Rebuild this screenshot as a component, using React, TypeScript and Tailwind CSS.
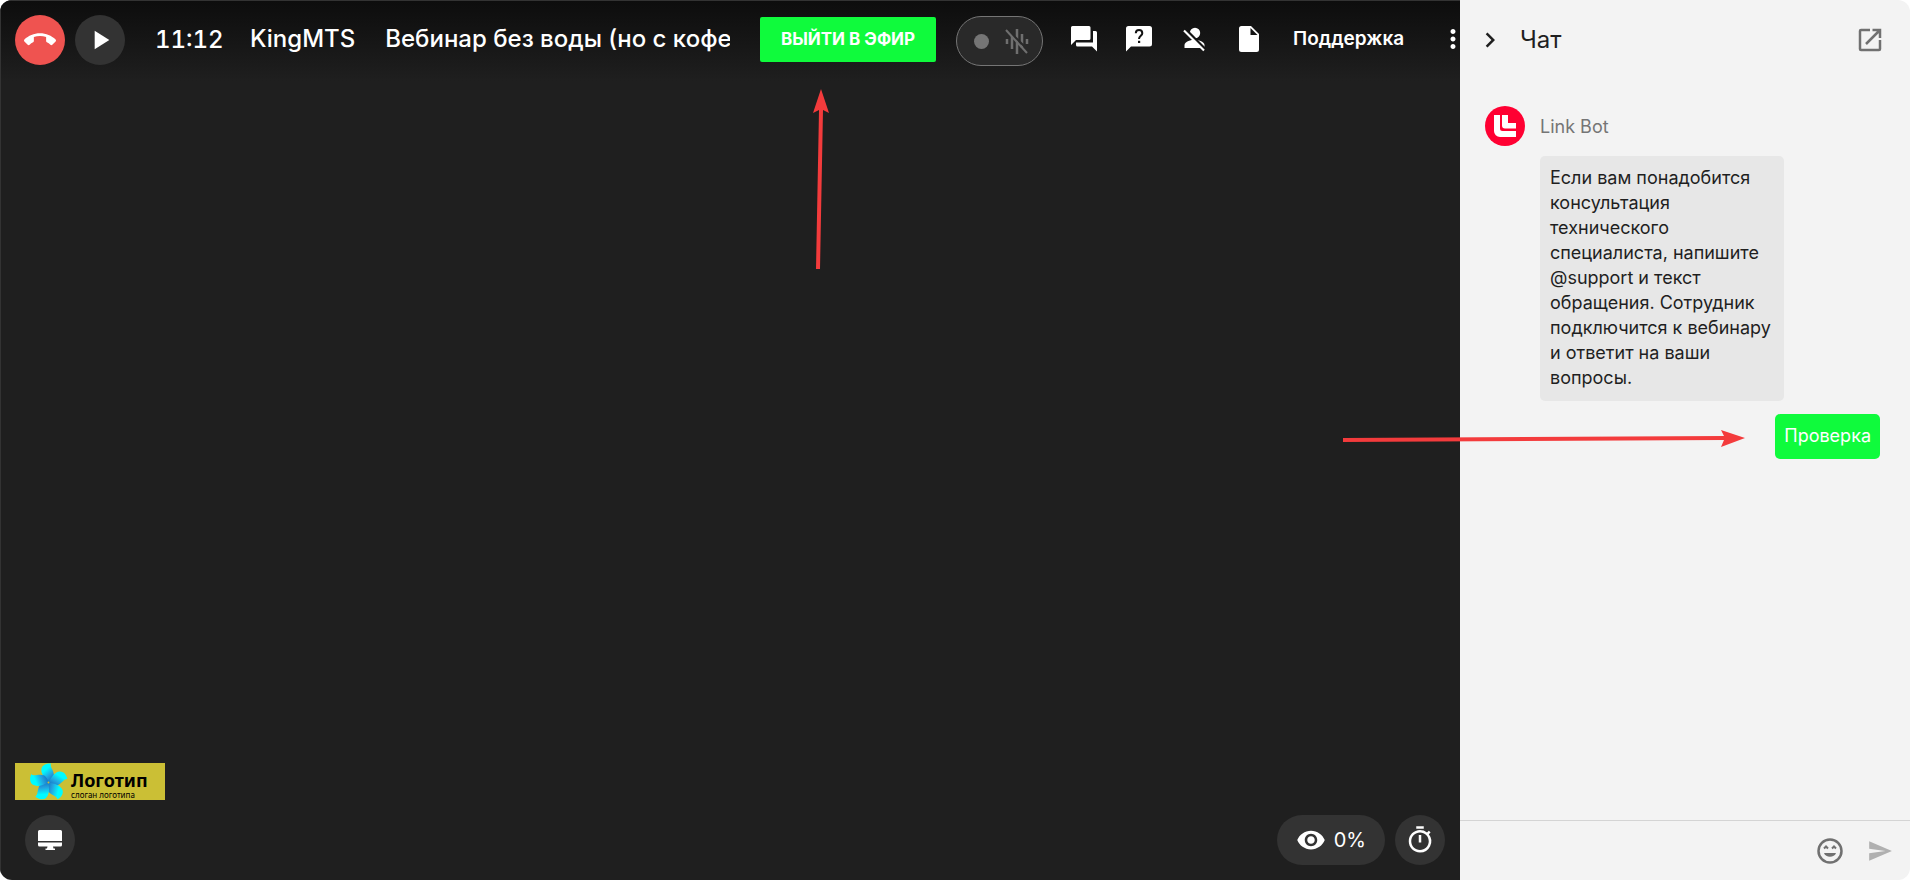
import type { ReactNode } from 'react'
import {
  MdCallEnd,
  MdPlayArrow,
  MdMoreVert,
  MdChevronRight,
  MdVisibility,
  MdOutlineTimer,
  MdSend,
} from 'react-icons/md'

function IconButton({ label, children }: { label: string; children: ReactNode }) {
  return (
    <button
      type="button"
      aria-label={label}
      className="flex h-12 w-[55px] shrink-0 items-center justify-center text-white"
    >
      {children}
    </button>
  )
}

function RoundButton({
  label,
  className = 'bg-[#333333]',
  children,
}: {
  label: string
  className?: string
  children: ReactNode
}) {
  return (
    <button
      type="button"
      aria-label={label}
      className={`flex size-[50px] shrink-0 items-center justify-center rounded-full text-white ${className}`}
    >
      {children}
    </button>
  )
}

function ForumIcon() {
  return (
    <svg viewBox="0 0 26 26" className="size-[26px]" fill="currentColor">
      <path d="M1.5 0h16.5A1.5 1.5 0 0 1 19.500 1.500V12.500A1.500 1.500 0 0 1 18 14H5L0 19V1.500A1.500 1.500 0 0 1 1.500 0Z" />
      <path d="M22 5h2.500A1.500 1.500 0 0 1 26 6.500V25.500l-5-5H6.500A1.500 1.500 0 0 1 5 19v-2.500h17Z" />
    </svg>
  )
}

function QuestionIcon() {
  return (
    <svg viewBox="0 0 26 26" className="size-[26px]">
      <path
        d="M2.500 0h21A2.500 2.500 0 0 1 26 2.500v15.500a2.500 2.500 0 0 1-2.500 2.500H5L0 25.500V2.500A2.500 2.500 0 0 1 2.500 0Z"
        fill="currentColor"
      />
      <path
        d="M9.800 7.200C9.800 2.900 16.300 2.900 16.300 7.200C16.300 9.700 13 10 13 13"
        fill="none"
        stroke="#131313"
        strokeWidth="2"
      />
      <path d="M12 14.800h2.200V17H12Z" fill="#131313" />
    </svg>
  )
}

function PersonOffIcon() {
  return (
    <svg viewBox="0 0 24 26" className="h-[26px] w-6">
      <circle cx="13" cy="7" r="5.200" fill="currentColor" />
      <path d="M2.500 22v-3c0-3.500 7-5.200 10-5.200s10 1.700 10 5.200v3Z" fill="currentColor" />
      <path d="M3.500 3.500l20 20" stroke="#151515" strokeWidth="3" />
      <path d="M2 4.500l20 20" stroke="currentColor" strokeWidth="2.200" />
    </svg>
  )
}

function DocumentIcon() {
  return (
    <svg viewBox="0 0 20 26" className="h-[26px] w-5">
      <path
        d="M2.500 0H12l8 8v15.500a2.500 2.500 0 0 1-2.500 2.500h-15A2.500 2.500 0 0 1 0 23.500v-21A2.500 2.500 0 0 1 2.500 0Z"
        fill="currentColor"
      />
      <path d="M11.500 2v7H18.500Z" fill="#131313" />
    </svg>
  )
}

function NoSoundIcon() {
  return (
    <svg viewBox="0 0 24 26" className="h-[26px] w-6" fill="none" stroke="#6f6f6f" strokeWidth="2.500">
      <path d="M2 11v5M7 8v13M12 1v25M17 6v14M22 11v5" />
      <path d="M2.500 1.500l21 21" stroke="#292929" strokeWidth="2" />
      <path d="M1 2l21 23" strokeWidth="2" />
    </svg>
  )
}

function ScreenIcon() {
  return (
    <svg viewBox="0 0 24 20" className="h-5 w-6" fill="currentColor">
      <path d="M1.500 0h21A1.500 1.500 0 0 1 24 1.500V11H0V1.500A1.500 1.500 0 0 1 1.500 0Z" />
      <path d="M0 12.500h24v2.500a1.500 1.500 0 0 1-1.500 1.500H15L15.500 18.500H17V20H7.500V18.500H9L9.500 16.500H1.500A1.500 1.500 0 0 1 0 15Z" />
    </svg>
  )
}

function OpenInNewIcon() {
  return (
    <svg viewBox="0 0 24 24" className="size-6" fill="none" stroke="#707070" strokeWidth="2.500">
      <path d="M12 2H3a1 1 0 0 0-1 1v18a1 1 0 0 0 1 1h18a1 1 0 0 0 1-1v-9" />
      <path d="M14.500 2H22v8M22 2L8 16" />
    </svg>
  )
}

function SmileIcon() {
  return (
    <svg viewBox="0 0 26 26" className="size-[26px]" fill="none" stroke="#707070">
      <circle cx="13" cy="13" r="11.500" strokeWidth="2.500" />
      <path d="M7 10.500l2-2 2 2M15 10.500l2-2 2 2" strokeWidth="2" />
      <path d="M7 15h12c-1.500 5-10.500 5-12 0Z" fill="#707070" stroke="none" />
    </svg>
  )
}

function BotAvatar() {
  return (
    <svg viewBox="0 0 40 40" className="size-10 shrink-0">
      <circle cx="20" cy="20" r="20" fill="#ff0032" />
      <path d="M9 9h6v13.500a2.500 2.500 0 0 0 2.500 2.500H31v6H15a6 6 0 0 1-6-6Z" fill="#fff" />
      <path d="M17 9h6v8h8v5.500H20a3 3 0 0 1-3-3Z" fill="#fff" />
    </svg>
  )
}

const petals = [0, 72, 144, 216, 288]

function Logo() {
  return (
    <div className="flex h-[37px] w-[150px] bg-[#cbbf35] pl-[14px] text-black">
      <svg viewBox="0 0 40 37" className="h-[37px] w-10 shrink-0">
        <defs>
          <linearGradient
            id="petal"
            gradientUnits="userSpaceOnUse"
            x1="14"
            y1="5"
            x2="24"
            y2="17"
          >
            <stop offset="0.200" stopColor="#00fbff" />
            <stop offset="0.600" stopColor="#22a8e2" />
            <stop offset="1" stopColor="#1673c4" />
          </linearGradient>
        </defs>
        {petals.map((angle) => (
          <path
            key={angle}
            d="M19.500 19.500C15 15 11.500 10 12.500 5.500C13.500 1.500 18 0 22 0.500C20.500 4 25 7 25 13C24 16 22 18 19.500 19.500Z"
            fill="url(#petal)"
            transform={`rotate(${angle} 19.500 19.500)`}
          />
        ))}
        <circle cx="19.500" cy="19.500" r="1" fill="#cbbf35" />
      </svg>
      <div className="flex flex-col pl-[2px] font-['Noto_Sans']">
        <span className="mt-2 text-[18px] leading-[19px] font-bold">Логотип</span>
        <span className="text-[8px] leading-[10px]">слоган логотипа</span>
      </div>
    </div>
  )
}

function Header() {
  return (
    <header className="flex h-20 items-start overflow-hidden bg-linear-to-b from-[#0d0d0d] to-[#1f1f1f] pt-[14px] pl-[14px] text-white">
      <div className="flex shrink-0 gap-[10px]">
        <RoundButton label="Завершить" className="bg-[#ef5350]">
          <MdCallEnd className="size-8" />
        </RoundButton>
        <RoundButton label="Воспроизвести">
          <MdPlayArrow className="size-8" />
        </RoundButton>
      </div>
      <time className="ml-[30px] w-[65px] shrink-0 text-[24px] leading-[50px] font-medium tabular-nums">
        11:12
      </time>
      <span className="ml-[30px] shrink-0 text-[24px] leading-[48px] font-medium">KingMTS</span>
      <h1 className="ml-[30px] min-w-0 flex-1 overflow-hidden text-[24px] leading-[48px] font-medium whitespace-nowrap">
        Вебинар без воды (но с кофе
      </h1>
      <button
        type="button"
        className="mt-[2px] ml-[30px] h-[45px] w-[176px] shrink-0 rounded-xs bg-[#0ffb3c] text-[17px] font-bold text-white"
      >
        ВЫЙТИ В ЭФИР
      </button>
      <div className="mt-px ml-5 flex h-[50px] w-[87px] shrink-0 items-center justify-center gap-4 rounded-full border border-[#757575] bg-[#292929] pl-1">
        <span className="size-[15px] rounded-full bg-[#757575]" />
        <NoSoundIcon />
      </div>
      <nav className="ml-[13px] flex shrink-0 items-start">
        <IconButton label="Чат">
          <ForumIcon />
        </IconButton>
        <IconButton label="Вопросы">
          <QuestionIcon />
        </IconButton>
        <IconButton label="Участники">
          <PersonOffIcon />
        </IconButton>
        <IconButton label="Файлы">
          <DocumentIcon />
        </IconButton>
        <a href="#" className="ml-[17px] w-[114px] text-[19px] leading-[48px] font-semibold">
          Поддержка
        </a>
        <button type="button" aria-label="Ещё" className="ml-[31px] h-12 w-[22px] overflow-hidden">
          <MdMoreVert className="size-[30px]" />
        </button>
      </nav>
    </header>
  )
}

function Stage() {
  return (
    <main className="flex min-w-0 flex-1 flex-col border-t border-l border-[#333333] bg-[#1f1f1f]">
      <Header />
      <div className="mt-auto px-[14px] pb-[15px]">
        <Logo />
        <div className="mt-[15px] flex justify-between pl-[10px]">
          <RoundButton label="Экран">
            <ScreenIcon />
          </RoundButton>
          <div className="flex gap-[10px] pr-px text-white">
            <button
              type="button"
              className="flex h-[50px] items-center gap-[8px] rounded-full bg-[#333333] px-[19px] text-[20px]"
            >
              <MdVisibility className="size-[30px]" />
              0%
            </button>
            <RoundButton label="Таймер">
              <MdOutlineTimer className="size-[30px]" />
            </RoundButton>
          </div>
        </div>
      </div>
    </main>
  )
}

function Chat() {
  return (
    <aside className="flex w-[450px] shrink-0 flex-col bg-[#f3f3f3] text-[#1f1f1f]">
      <div className="flex h-20 items-center px-[15px]">
        <button type="button" aria-label="Свернуть">
          <MdChevronRight className="size-[30px]" />
        </button>
        <h2 className="ml-[15px] text-[24px]">Чат</h2>
        <button type="button" aria-label="Открыть в новом окне" className="mr-[13px] ml-auto">
          <OpenInNewIcon />
        </button>
      </div>
      <div className="flex flex-1 flex-col px-[30px] pt-[26px] pl-[25px] text-[18px] leading-[25px]">
        <div className="flex items-center gap-[15px]">
          <BotAvatar />
          <span className="text-[#757575]">Link Bot</span>
        </div>
        <p className="mt-[10px] ml-[55px] w-[244px] rounded-[5px] bg-[#e7e7e7] px-[10px] pt-[9px] pb-[11px]">
          Если вам понадобится консультация технического специалиста, напишите @support и текст
          обращения. Сотрудник подключится к вебинару и ответит на ваши вопросы.
        </p>
        <p className="mt-[13px] self-end rounded-[5px] bg-[#0ffb3c] px-[9px] pt-[9px] pb-[11px] text-white">
          Проверка
        </p>
      </div>
      <form className="flex h-[60px] items-center border-t border-[#d4d4d4] pr-[17px]">
        <input type="text" aria-label="Сообщение" className="h-full min-w-0 flex-1 px-6 outline-none" />
        <button type="button" aria-label="Смайлы">
          <SmileIcon />
        </button>
        <button type="button" aria-label="Отправить" className="ml-[24px]">
          <MdSend className="size-[26px] text-[#b0b0b0]" />
        </button>
      </form>
    </aside>
  )
}

function Arrows() {
  return (
    <svg className="pointer-events-none absolute inset-0 size-full" fill="#f33b3c">
      <path d="M816 269L819 110L813 113L821 89L829 113L823 110L820 269Z" />
      <path d="M1343 438L1724 436L1721 430L1745 438L1721 447L1724 440L1343 442Z" />
    </svg>
  )
}

export default function App() {
  return (
    <div className="relative flex min-h-screen overflow-hidden rounded-xl font-['Inter','Liberation_Sans',sans-serif]">
      <Stage />
      <Chat />
      <Arrows />
    </div>
  )
}
